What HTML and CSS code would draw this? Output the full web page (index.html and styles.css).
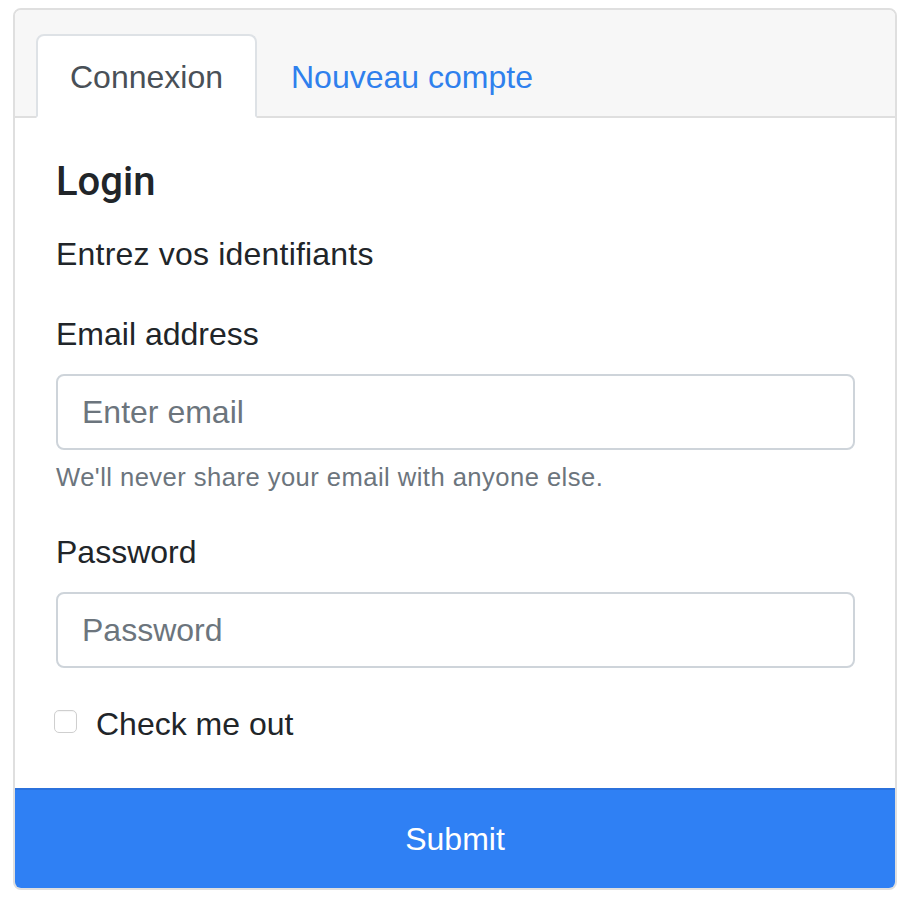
FILE: index.html
```html
<!DOCTYPE html>
<html lang="fr">
<head>
<meta charset="utf-8">
<title>Login</title>
<link rel="stylesheet" href="styles.css">
</head>
<body>
<div class="card">
  <div class="card-header">
    <ul class="tabs">
      <li><a class="tab active" href="#">Connexion</a></li>
      <li><a class="tab" href="#">Nouveau compte</a></li>
    </ul>
  </div>
  <form class="card-form">
    <div class="card-body">
      <h5 class="card-title">Login</h5>
      <p class="card-text">Entrez vos identifiants</p>
      <div class="form-group">
        <label class="label" for="email">Email address</label>
        <input class="input" type="email" id="email" placeholder="Enter email">
        <small class="help">We'll never share your email with anyone else.</small>
      </div>
      <div class="form-group">
        <label class="label" for="pwd">Password</label>
        <input class="input" type="password" id="pwd" placeholder="Password">
      </div>
      <div class="form-check">
        <input class="check" type="checkbox" id="chk">
        <label class="check-label" for="chk">Check me out</label>
      </div>
    </div>
    <button class="submit" type="button">Submit</button>
  </form>
</div>
</body>
</html>
```

FILE: styles.css
```css
* { box-sizing: border-box; }

html, body { background: #fff; }

body {
  margin: 0;
  padding: 8px 15px 0 13px;
  font-family: "Liberation Sans", Arial, sans-serif;
  font-size: 32px;
  line-height: 48px;
  color: #212529;
}

.card {
  border: 2px solid #dfdfdf;
  border-radius: 8px;
  background: #fff;
  overflow: hidden;
}

.card-header {
  background: #f7f7f7;
  padding: 24px 40px;
  border-bottom: 2px solid #dfdfdf;
}

.tabs {
  display: flex;
  list-style: none;
  margin: 0 -19px -24px;
  padding: 0;
}

.tab {
  display: block;
  padding: 17px 32px 15px;
  margin-bottom: -2px;
  border: 2px solid transparent;
  border-radius: 8px 8px 0 0;
  color: #2f80ed;
  text-decoration: none;
}

.tab.active {
  color: #495057;
  background: #fff;
  border-color: #dee2e6 #dee2e6 #fff;
}

.card-body {
  padding: 40px 40px 40px 41px;
}

.card-title {
  margin: 0 0 24px;
  font-family: Roboto, "Liberation Sans", sans-serif;
  font-size: 40px;
  line-height: 48px;
  font-weight: 500;
  color: #212529;
}

.card-text {
  margin: 0 0 32px;
  letter-spacing: 0.2px;
}

.form-group {
  margin-bottom: 32px;
}

.label {
  display: inline-block;
  margin-bottom: 16px;
}

.input {
  display: block;
  width: 100%;
  height: 76px;
  padding: 12px 24px;
  font-family: inherit;
  font-size: 32px;
  line-height: 48px;
  color: #495057;
  background: #fff;
  border: 2px solid #ced4da;
  border-radius: 8px;
  outline: none;
}

.input::placeholder {
  color: #6c757d;
  opacity: 1;
}

.help {
  display: block;
  margin-top: 8px;
  font-size: 25.6px;
  line-height: 38.4px;
  letter-spacing: 0.45px;
  color: #6c757d;
}

.form-check {
  position: relative;
  padding-left: 40px;
}

.check {
  position: absolute;
  left: -2px;
  top: 10px;
  margin: 0;
  width: 23px;
  height: 23px;
  appearance: none;
  -webkit-appearance: none;
  background: #fff;
  border: 1.5px solid #cfcfcf;
  border-radius: 5px;
  box-shadow: inset 0 1px 1px rgba(0,0,0,0.04);
}

.check-label {
  display: inline-block;
}

.submit {
  display: block;
  width: 100%;
  height: 100px;
  margin: 0;
  padding: 0;
  border: 0;
  border-top: 2px solid #2b71dc;
  background: #2f80f4;
  color: #fff;
  font-family: inherit;
  font-size: 32px;
  line-height: 48px;
  text-align: center;
  cursor: pointer;
}
```
